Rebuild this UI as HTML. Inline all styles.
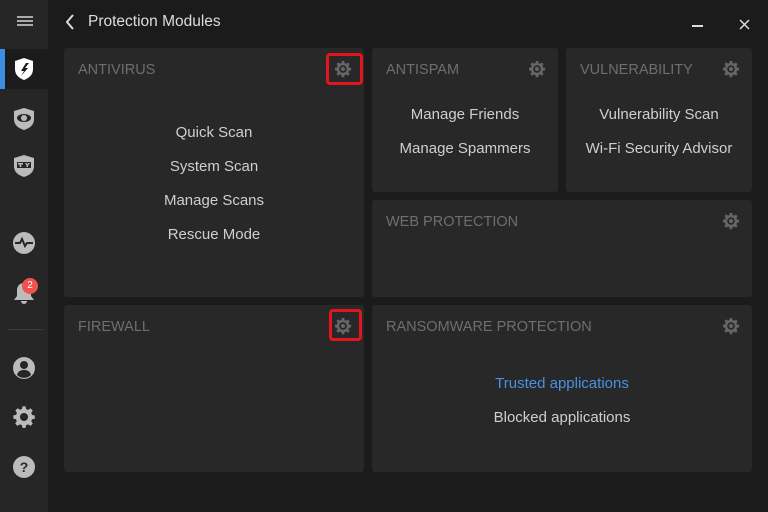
<!DOCTYPE html>
<html><head><meta charset="utf-8"><style>
*{margin:0;padding:0;box-sizing:border-box}
body{width:768px;height:512px;background:#1b1b1b;font-family:"Liberation Sans",sans-serif;position:relative;overflow:hidden}
.side{position:absolute;left:0;top:0;width:48px;height:512px;background:#262626}
.ic{position:absolute;left:12px;width:24px;height:24px}
.card{position:absolute;background:#282828;border-radius:3px}
.h{position:absolute;left:14px;top:14px;font-size:14.5px;color:#6e6e6e}
.g{position:absolute;top:12px;right:12px;width:18px;height:18px}
.it{position:absolute;left:0;right:0;text-align:center;font-size:15px;color:#cfcfcf}
.red{position:absolute;border:3px solid #e3151f;border-radius:4px}
</style></head><body>
<svg width="0" height="0" style="position:absolute"><defs>
<g id="gear"><path fill="#666" d="M7.8 1h2.4l.4 2.1 1.5.6 1.8-1.2 1.7 1.7-1.2 1.8.6 1.5 2.1.4v2.4l-2.1.4-.6 1.5 1.2 1.8-1.7 1.7-1.8-1.2-1.5.6-.4 2.1H7.8l-.4-2.1-1.5-.6-1.8 1.2-1.7-1.7 1.2-1.8-.6-1.5L1 10.2V7.8l2.1-.4.6-1.5-1.2-1.8 1.7-1.7 1.8 1.2 1.5-.6z"/><circle cx="9" cy="9" r="3.8" fill="#282828"/><circle cx="9" cy="9" r="2" fill="#666"/></g>
</defs></svg>
<div class="side">
<div style="position:absolute;left:17px;top:16px;width:16px;height:2px;background:#aaa;box-shadow:0 4px 0 #aaa,0 8px 0 #aaa"></div>
<div style="position:absolute;left:0;top:49px;width:48px;height:40px;background:#1b1b1b"></div>
<div style="position:absolute;left:0;top:49px;width:5px;height:40px;background:#3d8ee0"></div>
<svg class="ic" style="top:57px" viewBox="0 0 24 24"><path fill="#fff" d="M12 1l9 3v8c0 6-4 9-9 11C7 21 3 18 3 12V4z"/><path fill="#1b1b1b" d="M14 6l-5 8 3 0-3 5 7-8-3 0 4-5z"/></svg>
<svg class="ic" style="top:107px" viewBox="0 0 24 24"><path fill="#bbb" d="M12 1l10 3v8c0 6-4 9-10 11C6 21 2 18 2 12V4z"/><ellipse cx="12" cy="11" rx="7" ry="4" fill="#262626"/><circle cx="12" cy="11" r="3" fill="#bbb"/></svg>
<svg class="ic" style="top:154px" viewBox="0 0 24 24"><path fill="#bbb" d="M12 1l10 3v8c0 6-4 9-10 11C6 21 2 18 2 12V4z"/><rect x="5" y="8" width="14" height="6" fill="#262626"/><path fill="#bbb" d="M6 9h5v1.5H9.3V13H7.7v-2.5H6zM13 9h1.5l.8 1.5.8-1.5H18l-2 2.5V13h-1.4v-1.5z"/></svg>
<svg class="ic" style="top:231px" viewBox="0 0 24 24"><circle cx="12" cy="12" r="11" fill="#bbb"/><path d="M3 12h5l2-4 3 7 2-3h6" stroke="#262626" stroke-width="2" fill="none"/></svg>
<svg class="ic" style="top:281px" viewBox="0 0 24 24"><path fill="#bbb" d="M12 2c4 0 7 3 7 7v6l3 4H2l3-4V9c0-4 3-7 7-7zM9 20h6a3 3 0 01-6 0z"/></svg>
<div style="position:absolute;left:22px;top:278px;width:16px;height:16px;border-radius:50%;background:#ef5350;color:#fff;font-size:10px;text-align:center;line-height:16px">2</div>
<div style="position:absolute;left:7px;top:329px;width:36px;height:1px;background:#3a3a3a"></div>
<svg class="ic" style="top:356px" viewBox="0 0 24 24"><circle cx="12" cy="12" r="11" fill="#bbb"/><circle cx="12" cy="9" r="4" fill="#262626"/><path d="M5 19c1-4 4-5 7-5s6 1 7 5a10 10 0 01-14 0z" fill="#262626"/></svg>
<svg class="ic" style="top:405px" viewBox="0 0 18 18"><path fill="#bbb" d="M7.8 1h2.4l.4 2.1 1.5.6 1.8-1.2 1.7 1.7-1.2 1.8.6 1.5 2.1.4v2.4l-2.1.4-.6 1.5 1.2 1.8-1.7 1.7-1.8-1.2-1.5.6-.4 2.1H7.8l-.4-2.1-1.5-.6-1.8 1.2-1.7-1.7 1.2-1.8-.6-1.5L1 10.2V7.8l2.1-.4.6-1.5-1.2-1.8 1.7-1.7 1.8 1.2 1.5-.6z"/><circle cx="9" cy="9" r="3" fill="#262626"/></svg>
<svg class="ic" style="top:455px" viewBox="0 0 24 24"><circle cx="12" cy="12" r="11" fill="#bbb"/><text x="12" y="17" text-anchor="middle" font-family="Liberation Sans" font-weight="bold" font-size="14" fill="#262626">?</text></svg>
</div>
<svg style="position:absolute;left:64px;top:14px" width="12" height="16"><path d="M9 1L3 8l6 7" stroke="#ddd" stroke-width="2" fill="none"/></svg>
<div style="position:absolute;left:88px;top:13px;font-size:15.5px;color:#ddd">Protection Modules</div>
<div style="position:absolute;left:692px;top:25px;width:11px;height:1.5px;background:#ddd"></div>
<svg style="position:absolute;left:739px;top:19px" width="11" height="11"><path d="M1 1l9 9M10 1l-9 9" stroke="#ddd" stroke-width="1.5"/></svg>

<div class="card" style="left:64px;top:48px;width:300px;height:249px"><div class="h">ANTIVIRUS</div><svg class="g" viewBox="0 0 18 18"><use href="#gear"/></svg>
<div class="it" style="top:76px">Quick Scan</div><div class="it" style="top:110px">System Scan</div><div class="it" style="top:144px">Manage Scans</div><div class="it" style="top:178px">Rescue Mode</div></div>
<div class="card" style="left:372px;top:48px;width:186px;height:144px"><div class="h">ANTISPAM</div><svg class="g" viewBox="0 0 18 18"><use href="#gear"/></svg>
<div class="it" style="top:58px">Manage Friends</div><div class="it" style="top:92px">Manage Spammers</div></div>
<div class="card" style="left:566px;top:48px;width:186px;height:144px"><div class="h">VULNERABILITY</div><svg class="g" viewBox="0 0 18 18"><use href="#gear"/></svg>
<div class="it" style="top:58px">Vulnerability Scan</div><div class="it" style="top:92px">Wi-Fi Security Advisor</div></div>
<div class="card" style="left:372px;top:200px;width:380px;height:97px"><div class="h">WEB PROTECTION</div><svg class="g" viewBox="0 0 18 18"><use href="#gear"/></svg></div>
<div class="card" style="left:64px;top:305px;width:300px;height:167px"><div class="h">FIREWALL</div><svg class="g" viewBox="0 0 18 18"><use href="#gear"/></svg></div>
<div class="card" style="left:372px;top:305px;width:380px;height:167px"><div class="h">RANSOMWARE PROTECTION</div><svg class="g" viewBox="0 0 18 18"><use href="#gear"/></svg>
<div class="it" style="top:70px;color:#4a90e2">Trusted applications</div><div class="it" style="top:104px">Blocked applications</div></div>
<div class="red" style="left:326px;top:53px;width:37px;height:32px"></div>
<div class="red" style="left:329px;top:309px;width:33px;height:32px"></div>
</body></html>
